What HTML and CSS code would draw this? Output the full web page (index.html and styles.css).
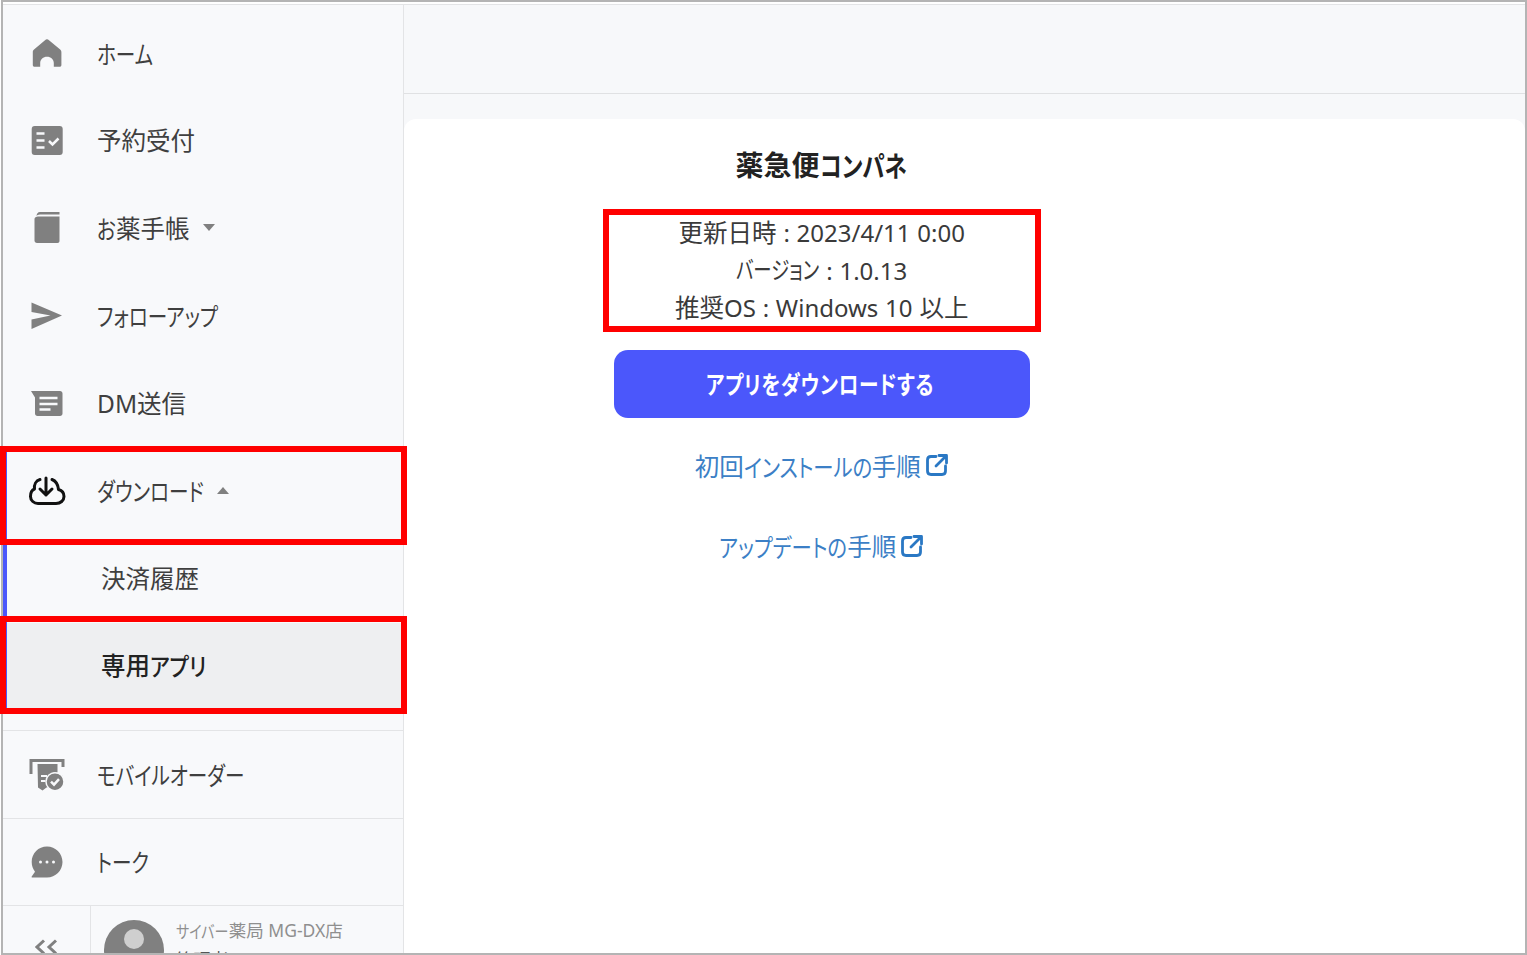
FILE: index.html
```html
<!DOCTYPE html>
<html lang="ja">
<head>
<meta charset="utf-8">
<title>専用アプリ</title>
<link rel="stylesheet" href="styles.css">
</head>
<body>
<div class="page">
  <div class="frame">
    <aside class="sidebar">
      <nav class="nav">
        <a class="item"><svg class="icon" viewBox="0 0 36 36"><path class="fill" d="M16 4.200 5 13.600C4 14.500 3.800 15.300 3.800 16.500V29c0 1.200.7 1.800 1.800 1.800h5.600V27c0-3.600 3-6.300 6.800-6.300s6.800 2.700 6.800 6.300v3.800h5.800c1.100 0 1.800-.6 1.800-1.800V16.500c0-1.200-.3-2-1.200-2.900L20 4.200c-1.300-1.200-2.700-1.200-4 0z"/></svg><span class="label"><b class="kana n3">ホーム</b></span></a>
        <a class="item"><svg class="icon" viewBox="0 0 36 36"><rect class="fill" x="2.700" y="3" width="31" height="29" rx="3"/><path class="white-line" d="M7.500 10.500h8M7.500 17.500h8M7.500 24.500h8"/><path class="white-check" d="M20 18l3.500 3.500 6-6"/></svg><span class="label">予約受付</span></a>
        <a class="item"><svg class="icon" viewBox="0 0 36 36"><path class="fill" d="M11 1h19.500v2.500H11c-2 0-3 .8-3.500 1.600C7.600 3 8.800 1 11 1z"/><path class="fill" d="M9 5.500h21.500V30c0 1.200-.8 2-2 2H8c-1.500 0-2.500-1-2.500-2.500V8c0-1.500 1.500-2.500 3.500-2.500z"/></svg><span class="label"><b class="kana n1">お</b>薬手帳</span><i class="caret"></i></a>
        <a class="item"><svg class="icon" viewBox="0 0 36 36"><path class="fill" d="M2.500 4.500 33 17.500 2.500 31v-9.500L21.500 17.500 2.500 14z"/></svg><span class="label"><b class="kana n7">フォローアップ</b></span></a>
        <a class="item"><svg class="icon" viewBox="0 0 36 36"><path class="fill" d="M2 5h29c1.500 0 2.500 1 2.500 2.500v20c0 1.500-1 2.500-2.500 2.500H8.500C7 30 6 29 6 27.500V11.500z"/><path class="white-line" d="M10.500 12h18M10.500 18h18M10.500 23.500h11"/></svg><span class="label">DM送信</span></a>
        <div class="group">
          <a class="item"><svg class="icon" viewBox="0 0 36 36"><path class="cloud" d="M11 6.500C7 7.500 5 11.500 5.500 16 2.800 17 1.500 20 1.500 23.500c0 4 3.500 7 7.500 7h18c4.500 0 8-3 8-7 0-3.500-2-6-5.500-7C29 12 27 8 23 6.500"/><path class="cloud" d="M17 5v17M11 16l6 6 6-6"/></svg><span class="label"><b class="kana n6">ダウンロード</b></span><i class="caret up"></i></a>
          <a class="item sub"><span class="label">決済履歴</span></a>
          <a class="item sub current"><span class="label">専用<b class="kana n3">アプリ</b></span></a>
        </div>
      </nav>
      <a class="item ruled"><svg class="icon" viewBox="0 0 36 36"><path class="outline" d="M2 18V4.500h32V11"/><path class="fill" d="M8.500 8h20v8.500H24l-4 3-1.500 6 1 5.500-2 .5-4 3-4.500-3z"/><path class="white-line thin" d="M12 20h6M12 25h4.500"/><circle class="fill ring" cx="26" cy="25.700" r="9"/><path class="white-check" d="M22 25.700l3 3 5-5.500"/></svg><span class="label"><b class="kana n8">モバイルオーダー</b></span></a>
      <a class="item ruled"><svg class="icon" viewBox="0 0 36 36"><path class="fill" d="M18 2.500C9.400 2.500 2.700 9.300 2.700 18c0 3.700 1.200 7 3.300 9.700L2.700 32.500c-.3.500 0 1 .5 1H18c8.600 0 15.500-7 15.500-15.500S26.600 2.500 18 2.500z"/><circle class="dot" cx="11.500" cy="18" r="1.500"/><circle class="dot" cx="18" cy="18" r="1.500"/><circle class="dot" cx="24.500" cy="18" r="1.500"/></svg><span class="label"><b class="kana n3">トーク</b></span></a>
      <div class="account">
        <div class="collapse"><svg class="chevrons" viewBox="0 0 24 18"><path d="M9 1.500 2 8l7 6.500M21 1.500 14 8l7 6.500"/></svg></div>
        <div class="user">
          <div class="avatar"><i class="head"></i></div>
          <div class="names">
            <div class="store"><b class="kana n4">サイバー</b>薬局 MG-DX店</div>
            <div class="person">管理者</div>
          </div>
        </div>
      </div>
    </aside>
    <div class="main">
      <header class="topbar"></header>
      <section class="card">
        <div class="column">
          <h1 class="title">薬急便<b class="kana n4">コンパネ</b></h1>
          <div class="info">
            <p>更新日時 <span class="latin">: 2023/4/11 0:00</span></p>
            <p><b class="kana n5 tight">バージョン</b> <span class="latin">: 1.0.13</span></p>
            <p>推奨<span class="latin">OS : Windows 10</span> 以上</p>
          </div>
          <a class="button"><b class="kana n12">アプリをダウンロードする</b></a>
          <a class="link first">初回<b class="kana n7">インストールの</b>手順<svg class="ext" viewBox="0 0 24 24"><path d="M11 3.500H6C3.800 3.500 2.500 4.800 2.500 7v11c0 2.200 1.300 3.500 3.500 3.500h11c2.200 0 3.500-1.300 3.500-3.500v-5M14 2.500h7.500V10M21 3 11 13"/></svg></a>
          <a class="link second"><b class="kana n7">アップデートの</b>手順<svg class="ext" viewBox="0 0 24 24"><path d="M11 3.500H6C3.800 3.500 2.500 4.800 2.500 7v11c0 2.200 1.300 3.500 3.500 3.500h11c2.200 0 3.500-1.300 3.500-3.500v-5M14 2.500h7.500V10M21 3 11 13"/></svg></a>
        </div>
      </section>
    </div>
  </div>
  <div class="mark mark-download"></div>
  <div class="mark mark-app"></div>
  <div class="mark mark-info"></div>
</div>
</body>
</html>
```
FILE: styles.css
```css
* { box-sizing: border-box; }
html, body { margin: 0; padding: 0; background: #fff; }
body {
  font-family: "Noto Sans", "Noto Sans CJK JP", sans-serif;
  font-feature-settings: "palt";
  color: #3f3f3f;
}
.kana {
  --s: .8;
  --y: .5px;
  display: inline-block;
  font-weight: inherit;
  white-space: nowrap;
  transform-origin: 0 50%;
  transform: translateY(var(--y)) scaleX(var(--s));
  margin-right: calc(var(--n) * (var(--s) - 1) * .9em);
}
.n1 { --n: 1; }
.n3 { --n: 3; }
.n4 { --n: 4; }
.n5 { --n: 5; }
.n6 { --n: 6; }
.n7 { --n: 7; }
.n8 { --n: 8; }
.n12 { --n: 12; }
.kana.tight { --s: .75; --y: -1px; }
.latin { font-size: 24px; }
.page { position: relative; width: 1527px; height: 955px; overflow: hidden; }
.frame {
  margin-left: 1px;
  width: 1526px;
  height: 955px;
  border: 2px solid #b4b4b4;
  padding-top: 2px;
  display: flex;
  overflow: hidden;
  background: #fff;
}
.sidebar {
  width: 401px;
  flex: none;
  background: #f8f9fb;
  border-right: 1px solid #e3e4e6;
  border-top: 1px solid #e3e4e6;
  display: flex;
  flex-direction: column;
}
.nav { padding-top: 5px; padding-bottom: 20px; }
.item {
  height: 87.5px;
  display: flex;
  align-items: center;
  padding-left: 25.5px;
  font-size: 24.5px;
  line-height: 1;
  color: #3f3f3f;
  flex: none;
}
.label { margin-left: 32.5px; white-space: nowrap; }
.ruled .label { padding-top: 1px; }
.icon { width: 36px; height: 36px; flex: none; overflow: visible; }
.fill { fill: #808080; }
.ring { stroke: #f8f9fb; stroke-width: 1.5; }
.dot { fill: #f8f9fb; }
.white-line { stroke: #f8f9fb; stroke-width: 2.5; fill: none; }
.white-line.thin { stroke-width: 2; }
.white-check { stroke: #f8f9fb; stroke-width: 2.5; fill: none; }
.outline { stroke: #808080; stroke-width: 3; fill: none; }
.cloud { stroke: #111; stroke-width: 3; fill: none; stroke-linejoin: round; stroke-linecap: round; }
.caret {
  margin-left: 13px;
  margin-top: -2px;
  width: 0;
  height: 0;
  border-left: 6.5px solid transparent;
  border-right: 6.5px solid transparent;
  border-top: 7px solid #808080;
}
.caret.up { border-top: 0; border-bottom: 7px solid #808080; }
.group { border-left: 4px solid #4b57fb; }
.group .item { padding-left: 21.5px; }
.item.sub { padding-left: 0; }
.item.sub .label { margin-left: 94px; }
.item.current { background: #eeeff1; color: #222; font-weight: 500; }
.item.current .kana { --s: .86; }
.ruled { border-top: 1px solid #e3e4e6; }
.account {
  border-top: 1px solid #e3e4e6;
  display: flex;
  flex: 1;
  min-height: 0;
  overflow: hidden;
}
.collapse {
  width: 88px;
  flex: none;
  border-right: 1px solid #e3e4e6;
  display: flex;
  padding: 33px 0 0 31.5px;
}
.chevrons { width: 24px; height: 18px; flex: none; }
.chevrons path { stroke: #808080; stroke-width: 3; fill: none; }
.user { display: flex; padding: 14px 0 0 13px; }
.avatar {
  width: 60px;
  height: 60px;
  border-radius: 50%;
  background: #808080;
  flex: none;
  display: flex;
  justify-content: center;
  padding-top: 9px;
}
.head { width: 20px; height: 20px; border-radius: 50%; background: #cfcfcf; }
.names { margin-left: 12px; margin-top: -1px; font-size: 17.5px; color: #8f8f8f; line-height: 22px; white-space: nowrap; }
.person { color: #555; margin-top: 7px; }
.main { flex: 1; display: flex; flex-direction: column; background: #f7f8fa; min-width: 0; }
.topbar { height: 90px; border-top: 1px solid #e3e4e6; border-bottom: 1px solid #e0e1e3; flex: none; background: #f7f8fa; }
.card {
  margin-top: 25px;
  flex: 1;
  background: #fff;
  border-radius: 12px 12px 0 0;
  padding-left: 210px;
}
.column { width: 415.5px; display: flex; flex-direction: column; align-items: center; padding-top: 26px; }
.title { margin: 0; font-size: 28px; line-height: 40px; font-weight: 700; color: #222; white-space: nowrap; }
.info { margin-top: 29px; text-align: center; font-size: 24.5px; line-height: 37.5px; color: #3a3a3a; white-space: nowrap; word-spacing: .5px; }
.info p { margin: 0; }
.button {
  margin-top: 23.5px;
  width: 415.5px;
  height: 68px;
  flex: none;
  border-radius: 14px;
  background: #4b57fb;
  color: #fff;
  font-size: 24.5px;
  font-weight: 700;
  letter-spacing: .9px;
  display: flex;
  align-items: center;
  justify-content: center;
}
.button .kana { --y: -1.5px; }
.link { display: flex; align-items: center; height: 40px; color: #3c7fc6; font-size: 24.5px; white-space: nowrap; }
.link .kana { --s: .83; }
.link.first { margin-top: 27px; }
.link.second { margin-top: 40.5px; }
.ext { width: 24px; height: 24px; margin-left: 4px; flex: none; }
.ext path { stroke: #2a78c4; stroke-width: 2.8; fill: none; stroke-linecap: round; stroke-linejoin: round; }
.mark { position: absolute; border: 6px solid #ff0000; }
.mark-download { left: 0; top: 446px; width: 407px; height: 99px; }
.mark-app { left: 0; top: 616px; width: 407px; height: 98px; }
.mark-info { left: 603px; top: 209px; width: 438px; height: 123px; }
```
